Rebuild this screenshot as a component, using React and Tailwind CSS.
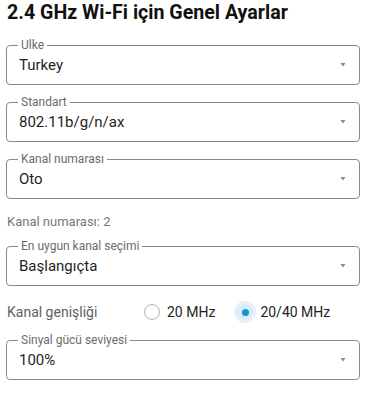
import { useState } from "react";

function SelectField({ label, value }) {
  return (
    <div className="relative flex h-[40px] items-center rounded border border-[#8a8a8a] pl-3 pr-[10px]">
      <span className="absolute -top-[9px] left-[11px] bg-white px-[3px] text-[12px] leading-[16px] text-[#6b6b6b]">
        {label}
      </span>
      <span className="flex-1 text-[15px] text-[#1f1f1f]">{value}</span>
      <svg width="10" height="6" viewBox="0 0 10 6" className="mr-[1px]">
        <path d="M2.5 1h5L5 4.5z" fill="#8a8a8a" />
      </svg>
    </div>
  );
}

function Radio({ checked, label, onClick }) {
  return (
    <button type="button" onClick={onClick} className="flex items-center gap-[7px]">
      <span
        className={`flex h-[16px] w-[16px] items-center justify-center rounded-full ${
          checked ? "bg-[#d9ecf8] ring-[3px] ring-[#e6f2fa]" : "border border-[#b0b0b0]"
        }`}
      >
        {checked && <span className="h-[7px] w-[7px] rounded-full bg-[#1a8fd8]" />}
      </span>
      <span className="text-[14px] leading-[20px] text-[#1f1f1f]">{label}</span>
    </button>
  );
}

export default function App() {
  const [width, setWidth] = useState("40");

  return (
    <div className="bg-white px-[6px] pt-[1px] font-['Roboto',sans-serif]">
      <h1 className="pl-[1px] text-[19.6px] font-bold leading-[24px] text-[#111]">
        2.4 GHz Wi-Fi için Genel Ayarlar
      </h1>

      <div className="mt-[20px] flex flex-col gap-[17px]">
        <SelectField label="Ulke" value="Turkey" />
        <SelectField label="Standart" value="802.11b/g/n/ax" />
        <SelectField label="Kanal numarası" value="Oto" />
      </div>

      <p className="mt-[15px] pl-[1px] text-[13px] leading-[15px] text-[#777]">Kanal numarası: 2</p>

      <div className="mt-[17px]">
        <SelectField label="En uygun kanal seçimi" value="Başlangıçta" />
      </div>

      <div className="mt-[16px] flex h-[20px] items-center pl-[1px]">
        <span className="w-[137px] text-[14px] text-[#5f5f5f]">Kanal genişliği</span>
        <div className="flex items-center gap-[22px]">
          <Radio checked={width === "20"} label="20 MHz" onClick={() => setWidth("20")} />
          <Radio checked={width === "40"} label="20/40 MHz" onClick={() => setWidth("40")} />
        </div>
      </div>

      <div className="mt-[18px]">
        <SelectField label="Sinyal gücü seviyesi" value="100%" />
      </div>
    </div>
  );
}
